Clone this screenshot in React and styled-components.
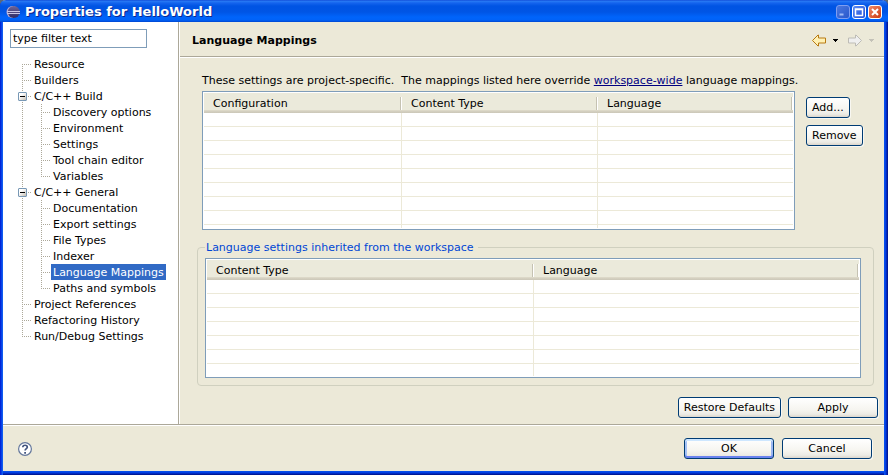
import React from "react";
import styled, { createGlobalStyle, css } from "styled-components";

const face = "#ece9d8";
const shadow = "#aca899";
const fieldBorder = "#7f9db9";
const dotsDown = `linear-gradient(${shadow} 50%, transparent 50%) 0 0 / 1px 2px repeat-y`;

const GlobalStyle = createGlobalStyle`
  *, *::before, *::after { box-sizing: border-box; }
  body {
    margin: 0;
    background: #5c6a78;
    color: #000;
    font: 11px/16px Verdana, "DejaVu Sans", sans-serif;
  }
  button, input { font: inherit; color: inherit; }
`;

const Window = styled.div`
  display: flex;
  flex-direction: column;
  min-height: 100vh;
  background: linear-gradient(90deg, #0019cf 0, #0a4ef0 2px, #166aee 3px, transparent 3px),
    linear-gradient(270deg, #00138c 0, #001ea0 1px, #0038e0 2px, #0855ee 4px, transparent 4px),
    linear-gradient(0deg, #00138c 0, #001ea0 1px, #0038e0 2px, #0855ee 4px, transparent 4px), ${face};
  padding: 0 4px 4px 3px;
  border-radius: 6px 6px 0 0;
  overflow: hidden;
`;

const TitleBar = styled.header`
  display: flex;
  align-items: center;
  gap: 5px;
  height: 22px;
  margin: 0 -4px 0 -3px;
  padding: 2px 6px 0 6px;
  background: linear-gradient(#0a3fd0 0, #2a7cf5 1px, #1464ee 3px, #0054e3 6px, #0055e5 12px, #0064fb 17px, #0062f8 20px, #0046d0 22px);
  color: #fff;
`;

const WindowTitle = styled.h1`
  flex: 1;
  margin: 0;
  font-size: 13px;
  line-height: 16px;
  font-weight: bold;
  text-shadow: 1px 1px 0 #0a2a90;
`;

const Captions = styled.div`
  display: flex;
  gap: 2px;
`;

const CaptionButton = styled.button`
  display: block;
  width: 14px;
  height: 14px;
  padding: 0;
  border: 1px solid ${(p) => (p.$tone === "dim" ? "#7f9df0" : "#fff")};
  border-radius: 3px;
  background: ${(p) =>
    ({
      dim: "linear-gradient(135deg, #4a78e0, #2a58cc)",
      blue: "linear-gradient(135deg, #5c8df5, #1d4fd8)",
      red: "linear-gradient(135deg, #f08a68, #cc3a10)",
    })[p.$tone]};
  svg { display: block; }
`;

const Body = styled.div`
  display: flex;
  flex: 1;
`;

const Sidebar = styled.nav`
  flex: 0 0 176px;
  padding: 7px;
  background: #fff;
  border-right: 1px solid ${shadow};
`;

const Filter = styled.input`
  display: block;
  width: 137px;
  height: 19px;
  margin-bottom: 8px;
  padding: 0 2px;
  border: 1px solid ${fieldBorder};
  background: #fff;
  outline: none;
`;

const Tree = styled.ul`
  margin: 0;
  padding: 0 0 0 12px;
  list-style: none;
`;

const Branch = styled.ul`
  margin: 0;
  padding: 0 0 0 19px;
  list-style: none;
  background: ${dotsDown};
`;

const TreeRow = styled.div`
  display: flex;
  height: 16px;
`;

const Guide = styled.span`
  position: relative;
  flex: none;
  width: 10px;
  height: 16px;
  background: ${dotsDown},
    linear-gradient(90deg, ${shadow} 50%, transparent 50%) 0 8px / 2px 1px repeat-x;
  ${(p) => p.$edge === "last" && css`height: 9px;`}
  ${(p) =>
    p.$edge === "first" &&
    css`
      height: 8px;
      margin-top: 8px;
      background: ${dotsDown},
        linear-gradient(90deg, ${shadow} 50%, transparent 50%) 0 0 / 2px 1px repeat-x;
    `}
`;

const Expander = styled.button`
  position: absolute;
  left: -4px;
  top: 4px;
  width: 9px;
  height: 9px;
  padding: 0;
  border: 1px solid #7898b5;
  border-radius: 1px;
  background: linear-gradient(#000, #000) center / 5px 1px no-repeat,
    linear-gradient(135deg, #fff 30%, #c6beb2);
`;

const TreeLabel = styled.a`
  padding: 1px 2px 0;
  color: ${(p) => (p.$selected ? "#fff" : "#000")};
  background: ${(p) => (p.$selected ? "#316ac5" : "transparent")};
  text-decoration: none;
  white-space: nowrap;
`;

const Page = styled.main`
  display: flex;
  flex: 1;
  flex-direction: column;
  min-width: 0;
  border-left: 1px solid #fff;
`;

const PageHeader = styled.div`
  display: flex;
  align-items: center;
  justify-content: space-between;
  height: 35px;
  padding: 3px 10px 0 12px;
  border-bottom: 1px solid ${shadow};
  box-shadow: 0 1px 0 #fff;
`;

const PageTitle = styled.h2`
  margin: 0;
  font-size: 11px;
  font-weight: bold;
`;

const History = styled.div`
  display: flex;
  align-items: center;
`;

const ToolButton = styled.button`
  display: block;
  padding: 0;
  border: 0;
  background: none;
  margin-left: ${(p) => (p.$wide ? "10px" : "7px")};
  svg { display: block; }
`;

const Content = styled.div`
  padding: 16px 10px 11px 17px;
`;

const Mappings = styled.section`
  padding-left: 5px;
`;

const Note = styled.p`
  margin: 0 0 2px;
  white-space: pre-wrap;
  a { color: #000080; }
`;

const Split = styled.div`
  display: flex;
  gap: 11px;
`;

const SideButtons = styled.div`
  display: flex;
  flex: 0 0 68px;
  flex-direction: column;
  align-items: flex-start;
  gap: 7px;
  padding-top: 6px;
`;

const PushButton = styled.button`
  height: 21px;
  min-width: ${(p) => (p.$size === "wide" ? "90px" : "0")};
  padding: 1px 5px 0;
  border: 1px solid #003c74;
  border-radius: 3px;
  background: linear-gradient(#fff, #f6f5f0 60%, #ecebe5 85%, #dcd6cc);
  line-height: 18px;
  white-space: nowrap;
  box-shadow: ${(p) =>
    p.$primary
      ? "inset 0 2px 0 #cee7ff, inset 0 -2px 0 #6982ee, inset 2px 0 0 #a5c2f5, inset -2px 0 0 #9ab6f2"
      : "1px 1px 0 #f8f7f1"};
`;

const TableFrame = styled.div`
  flex: 1;
  min-width: 0;
  padding: 1px;
  border: 1px solid ${fieldBorder};
  background: #fff;
`;

const Grid = styled.table`
  width: 100%;
  table-layout: fixed;
  border-collapse: separate;
  border-spacing: 0;
`;

const HeadCell = styled.th`
  width: ${(p) => (p.$width ? `${p.$width}px` : "auto")};
  height: 20px;
  padding: 1px 0 0 9px;
  background: linear-gradient(#c5c2b2, #c5c2b2) right 1px top 4px / 1px 13px no-repeat,
    linear-gradient(#fff, #fff) right 0 top 4px / 1px 13px no-repeat,
    linear-gradient(#ebeadb 17px, #e2decd 17px, #d6d2c2 18px, #cbc7b8 20px);
  font-weight: normal;
  text-align: left;
`;

const Cell = styled.td`
  height: ${(p) => p.$height}px;
  padding: 0;
  border-bottom: ${(p) => (p.$open ? "0" : `1px solid ${face}`)};
  border-right: 1px solid ${face};
  &:last-child { border-right: 0; }
`;

const Inherited = styled.fieldset`
  min-width: 0;
  margin: 9px 0 0;
  padding: 3px 12px 7px 7px;
  border: 1px solid #d0d0bf;
  border-radius: 4px;
`;

const Legend = styled.legend`
  padding: 1px 4px 0 1px;
  line-height: 15px;
  color: #0046d5;
`;

const PageActions = styled.div`
  display: flex;
  justify-content: flex-end;
  gap: 7px;
  margin-top: auto;
  padding: 0 6px 6px;
`;

const Footer = styled.footer`
  display: flex;
  align-items: center;
  gap: 8px;
  height: 47px;
  padding: 1px 12px 0 15px;
  border-top: 1px solid ${shadow};
  box-shadow: inset 0 1px 0 #fff;
`;

const HelpButton = styled.button`
  margin-right: auto;
  padding: 0;
  border: 0;
  background: none;
  svg { display: block; }
`;

const EclipseIcon = () => (
  <svg width="14" height="14" viewBox="0 0 14 14" aria-hidden="true">
    <defs>
      <linearGradient id="globe" x1="0" y1="0" x2="0" y2="1">
        <stop offset="0" stopColor="#6f6698" />
        <stop offset="1" stopColor="#2f2a66" />
      </linearGradient>
    </defs>
    <circle cx="6.5" cy="7" r="6" fill="#b9a9cf" />
    <circle cx="7.8" cy="7" r="6" fill="url(#globe)" />
    <path d="M1 6.5h13M1 8.5h13" stroke="#c9c6e6" />
  </svg>
);

const arrow = "M0.5 6.5L6 1h.5v3h7v5h-7v3H6z";

const ArrowIcon = ({ forward }) => (
  <svg width="14" height="13" viewBox="0 0 14 13" aria-hidden="true">
    <path
      d={arrow}
      transform={forward ? "matrix(-1 0 0 1 14 0)" : undefined}
      fill={forward ? "#efefef" : "#fff1b4"}
      stroke={forward ? "#bdbcb6" : "#b87a12"}
    />
  </svg>
);

const DropIcon = ({ color }) => (
  <svg width="5" height="3" viewBox="0 0 5 3" shapeRendering="crispEdges" aria-hidden="true">
    <path d="M0 0h5v1H4v1H3v1H2V2H1V1H0z" fill={color} />
  </svg>
);

const HelpIcon = () => (
  <svg width="14" height="14" viewBox="0 0 14 14" fill="none" aria-hidden="true">
    <circle cx="7" cy="7" r="6.4" fill="#fff" stroke="#64779b" strokeWidth="1.2" />
    <path d="M4.8 5.2C4.8 2.6 9.3 2.6 9.3 5.2 9.3 6.7 7.1 6.6 7.1 8.6" stroke="#43557f" strokeWidth="1.7" />
    <path d="M6.2 10h1.8v1.7H6.2z" fill="#43557f" />
  </svg>
);

const captionMarks = {
  Minimize: ["dim", <path key="m" d="M2.5 8.5h4" stroke="#9fb9f5" strokeWidth="2" />],
  Maximize: ["blue", <path key="m" d="M2.5 3h7v6.5h-7zM2.5 3.5h7" stroke="#fff" strokeWidth="1.5" />],
  Close: ["red", <path key="m" d="M3 3l6 6M9 3l-6 6" stroke="#fff" strokeWidth="2" />],
};

const treeItems = [
  { name: "Resource" },
  { name: "Builders" },
  {
    name: "C/C++ Build",
    children: ["Discovery options", "Environment", "Settings", "Tool chain editor", "Variables"],
  },
  {
    name: "C/C++ General",
    children: ["Documentation", "Export settings", "File Types", "Indexer", "Language Mappings", "Paths and symbols"],
  },
  { name: "Project References" },
  { name: "Refactoring History" },
  { name: "Run/Debug Settings" },
];

const edgeOf = (index, list, openStart) => {
  if (index === list.length - 1) return "last";
  return index === 0 && openStart ? "first" : undefined;
};

function TreeNode({ name, edge, children, selected }) {
  return (
    <li>
      <TreeRow>
        <Guide $edge={edge}>{children && <Expander aria-label={`Collapse ${name}`} />}</Guide>
        <TreeLabel href="#" $selected={selected} aria-current={selected ? "page" : undefined}>
          {name}
        </TreeLabel>
      </TreeRow>
      {children && <Branch>{children}</Branch>}
    </li>
  );
}

function DataTable({ label, columns, rows, tail }) {
  return (
    <TableFrame>
      <Grid aria-label={label}>
        <thead>
          <tr>
            {columns.map(([name, width]) => (
              <HeadCell key={name} scope="col" $width={width}>{name}</HeadCell>
            ))}
          </tr>
        </thead>
        <tbody>
          {Array.from({ length: rows }, (_, row) => (
            <tr key={row}>
              {columns.map(([name]) => <Cell key={name} $height={14} />)}
            </tr>
          ))}
          <tr>
            {columns.map(([name]) => <Cell key={name} $height={tail} $open />)}
          </tr>
        </tbody>
      </Grid>
    </TableFrame>
  );
}

export default function App() {
  return (
    <>
      <GlobalStyle />
      <Window>
        <TitleBar>
          <EclipseIcon />
          <WindowTitle>Properties for HelloWorld</WindowTitle>
          <Captions>
            {Object.entries(captionMarks).map(([name, [tone, mark]]) => (
              <CaptionButton key={name} $tone={tone} aria-label={name}>
                <svg width="12" height="12" viewBox="0 0 12 12" fill="none">{mark}</svg>
              </CaptionButton>
            ))}
          </Captions>
        </TitleBar>
        <Body>
          <Sidebar>
            <Filter type="text" aria-label="Filter" defaultValue="type filter text" />
            <Tree>
              {treeItems.map((item, i) => (
                <TreeNode key={item.name} name={item.name} edge={edgeOf(i, treeItems, true)}>
                  {item.children &&
                    item.children.map((name, j) => (
                      <TreeNode
                        key={name}
                        name={name}
                        edge={edgeOf(j, item.children, false)}
                        selected={name === "Language Mappings"}
                      />
                    ))}
                </TreeNode>
              ))}
            </Tree>
          </Sidebar>
          <Page>
            <PageHeader>
              <PageTitle>Language Mappings</PageTitle>
              <History>
                <ToolButton aria-label="Back"><ArrowIcon /></ToolButton>
                <ToolButton aria-label="Back history"><DropIcon color="#000" /></ToolButton>
                <ToolButton $wide aria-label="Forward" disabled><ArrowIcon forward /></ToolButton>
                <ToolButton aria-label="Forward history" disabled><DropIcon color="#c4c2b8" /></ToolButton>
              </History>
            </PageHeader>
            <Content>
              <Mappings>
                <Note>
                  {"These settings are project-specific.  The mappings listed here override "}
                  <a href="#">workspace-wide</a> language mappings.
                </Note>
                <Split>
                  <DataTable
                    label="Project language mappings"
                    columns={[["Configuration", 198], ["Content Type", 196], ["Language"]]}
                    rows={8}
                    tail={3}
                  />
                  <SideButtons>
                    <PushButton>Add...</PushButton>
                    <PushButton>Remove</PushButton>
                  </SideButtons>
                </Split>
              </Mappings>
              <Inherited>
                <Legend>Language settings inherited from the workspace</Legend>
                <DataTable
                  label="Workspace language mappings"
                  columns={[["Content Type", 327], ["Language"]]}
                  rows={6}
                  tail={12}
                />
              </Inherited>
            </Content>
            <PageActions>
              <PushButton>Restore Defaults</PushButton>
              <PushButton $size="wide">Apply</PushButton>
            </PageActions>
          </Page>
        </Body>
        <Footer>
          <HelpButton aria-label="Help"><HelpIcon /></HelpButton>
          <PushButton $size="wide" $primary>OK</PushButton>
          <PushButton $size="wide">Cancel</PushButton>
        </Footer>
      </Window>
    </>
  );
}
